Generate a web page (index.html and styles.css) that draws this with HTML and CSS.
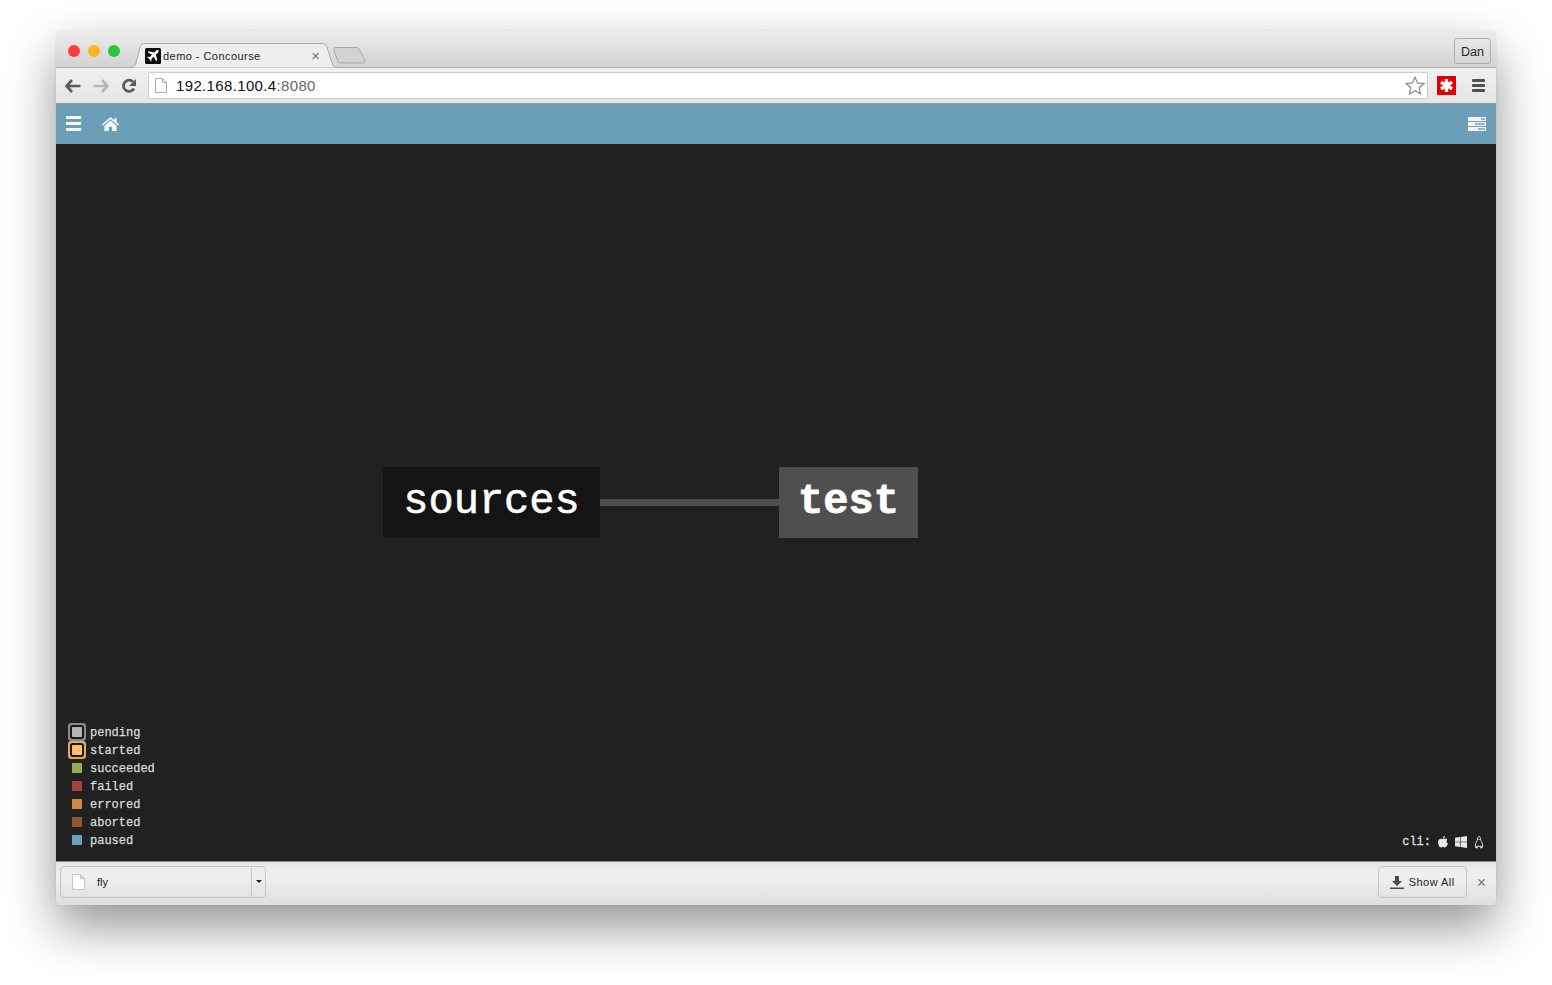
FILE: index.html
```html
<!DOCTYPE html>
<html>
<head>
	<meta charset="utf-8">
	<meta name="viewport" content="width=device-width, initial-scale=1">
	<title>demo - Concourse</title>
	<link rel="stylesheet" href="styles.css">
</head>
<body>
	<div class="window">
		<div class="tabstrip">
			<div class="lights">
				<span class="light red"></span>
				<span class="light yellow"></span>
				<span class="light green"></span>
			</div>
			<div class="tab">
				<svg class="tab-shape" width="208" height="25" viewBox="0 0 208 25">
					<path d="M0 24.500C4 24.500 5 23 6 20L10 4C11 1.500 12.500 .5 15 .5H192C194.500 .5 196 1.500 197 4L202 20C203 23 204 24.500 208 24.500" fill="#eeeeee" stroke="#a9a9a9"/>
				</svg>
				<svg class="favicon" width="16" height="16" viewBox="0 0 16 16">
					<rect width="16" height="16" rx="1.500" fill="#0a0a0a"/>
					<path d="M13.400 2.100C12.700 1.700 11.700 2 11 2.800L9.200 4.600 3.800 3.200 2.700 4.300 7 6.800 4.800 9.100 3 8.800 2.200 9.600 4.400 11 5.700 13.400 6.500 12.600 6.300 10.900 8.700 8.700 11.100 13.100 12.300 12 10.900 6.700 12.800 4.900C13.600 4 13.900 2.900 13.400 2.100Z" fill="#fff"/>
				</svg>
				<span class="tab-title">demo - Concourse</span>
				<span class="tab-close">×</span>
			</div>
			<svg class="newtab" width="33" height="17" viewBox="0 0 33 17">
				<path d="M2.500 .5H23C25 .5 26 1.500 26.700 3L32 13C32.700 15 32 16 30 16H8C6 16 5 15 4.500 13.500L1 3C.5 1.500 1 .5 2.500 .5Z" fill="#d2d2d2" stroke="#a8a8a8"/>
			</svg>
			<div class="spacer"></div>
			<div class="profile">Dan</div>
		</div>

		<div class="toolbar">
			<svg class="nav-icon" width="16" height="14" viewBox="0 0 16 14">
				<path d="M7 1 1.500 7 7 13M2 7H15.500" fill="none" stroke="#5a5a5a" stroke-width="2.600"/>
			</svg>
			<svg class="nav-icon" width="16" height="14" viewBox="0 0 16 14">
				<path d="M9 1 14.500 7 9 13M14 7H.5" fill="none" stroke="#b5b5b5" stroke-width="2.600"/>
			</svg>
			<svg class="nav-icon" width="16" height="16" viewBox="0 0 16 16">
				<path d="M13 10.500A5.600 5.600 0 1 1 12 3.800" fill="none" stroke="#5a5a5a" stroke-width="2.800"/>
				<path d="M15 1V8H8Z" fill="#5a5a5a"/>
			</svg>
			<div class="omnibox">
				<svg class="page-icon" width="12" height="15" viewBox="0 0 12 15">
					<path d="M.5 .5H7.500L11.500 4.500V14.500H.5ZM7.500 .5V4.500H11.500" fill="#fff" stroke="#adadad"/>
				</svg>
				<span class="url">192.168.100.4<span class="url-port">:8080</span></span>
				<svg class="star" width="20" height="19" viewBox="0 0 20 19">
					<path d="M10 1.200 12.600 6.900 18.800 7.600 14.200 11.800 15.500 17.900 10 14.800 4.500 17.900 5.800 11.800 1.200 7.600 7.400 6.900Z" fill="#fff" stroke="#8e8e8e" stroke-width="1.300"/>
				</svg>
			</div>
			<svg class="lastpass" width="19" height="19" viewBox="0 0 19 19">
				<rect width="19" height="19" fill="#e00000"/>
				<path d="M9.500 3V16M3.900 6.300 15.100 12.700M15.100 6.300 3.900 12.700" stroke="#fff" stroke-width="3.400"/>
			</svg>
			<div class="chrome-menu"><span></span><span></span><span></span></div>
		</div>

		<div class="appbar">
			<div class="burger"><span></span><span></span><span></span></div>
			<svg class="home" width="17" height="14" viewBox="0 0 17 14">
				<path d="M8.500 0 12.500 3.500V1H14.500V5.200L17 7.400 16 8.500 8.500 2 1 8.500 0 7.400Z" fill="#fff"/>
				<path d="M8.500 3.500 14.500 8.700V14H10.200V9.800H6.800V14H2.500V8.700Z" fill="#fff"/>
			</svg>
			<div class="spacer"></div>
			<div class="builds">
				<div class="builds-row"><span class="mark short"></span></div>
				<div class="builds-row"><span class="mark long"></span></div>
				<div class="builds-row"><span class="mark mid"></span></div>
			</div>
		</div>

		<div class="canvas">
			<div class="node node-sources">sources</div>
			<div class="edge"></div>
			<div class="node node-test">test</div>

			<div class="footer">
				<ul class="legend">
					<li><span class="swatch pending"></span><span class="legend-text">pending</span></li>
					<li><span class="swatch started"></span><span class="legend-text">started</span></li>
					<li><span class="swatch succeeded"></span><span class="legend-text">succeeded</span></li>
					<li><span class="swatch failed"></span><span class="legend-text">failed</span></li>
					<li><span class="swatch errored"></span><span class="legend-text">errored</span></li>
					<li><span class="swatch aborted"></span><span class="legend-text">aborted</span></li>
					<li><span class="swatch paused"></span><span class="legend-text">paused</span></li>
				</ul>
				<div class="cli">
					<span class="cli-label">cli:</span>
					<svg width="10" height="12" viewBox="0 0 10 12">
						<path d="M7 0C7.100 1.300 6 2.600 4.800 2.600 4.700 1.300 5.900 .1 7 0ZM5 3.100C5.600 3.100 6.300 2.600 7.300 2.600 8.100 2.600 9 3 9.500 3.800 8.100 4.600 8.300 6.900 10 7.500 9.500 9 8.300 11.500 7 11.500 6.200 11.500 5.900 11 5 11 4.100 11 3.800 11.500 3 11.500 1.600 11.500 0 8.500 0 6.300 0 4 1.400 2.700 2.800 2.700 3.700 2.700 4.400 3.100 5 3.100Z" fill="#e8e8e8"/>
					</svg>
					<svg width="12" height="12" viewBox="0 0 12 12">
						<path d="M0 1.800 5 1.100V5.700H0ZM5.600 1 12 0V5.700H5.600ZM0 6.300H5V10.900L0 10.200ZM5.600 6.300H12V12L5.600 11Z" fill="#e8e8e8"/>
					</svg>
					<svg width="10" height="13" viewBox="0 0 10 13">
						<path d="M5 .5C6.200 .5 6.400 1.800 6.500 3 6.600 4.800 8.600 7 8.800 9.200 8.900 10 8.400 10.300 7.800 10.300H2.200C1.600 10.300 1.100 10 1.200 9.200 1.400 7 3.400 4.800 3.500 3 3.600 1.800 3.800 .5 5 .5Z" fill="#212121" stroke="#e8e8e8" stroke-width=".9"/>
						<path d="M3.900 2.900H6.100L5 4.100ZM.8 10.400 3.600 10.600 3.800 12.500 1.600 12.100ZM9.200 10.400 6.400 10.600 6.200 12.500 8.400 12.100Z" fill="#e8e8e8"/>
					</svg>
				</div>
			</div>
		</div>

		<div class="downloads">
			<div class="download-item">
				<svg class="file-icon" width="13" height="16" viewBox="0 0 13 16">
					<path d="M.5 .5H8.500L12.500 4.500V15.500H.5Z" fill="#fff" stroke="#c4c4c4"/>
					<path d="M8.500 .5V4.500H12.500Z" fill="#ddd" stroke="#c4c4c4"/>
				</svg>
				<span class="file-name">fly</span>
				<span class="download-arrow"></span>
			</div>
			<div class="spacer"></div>
			<div class="show-all">
				<svg width="14" height="13" viewBox="0 0 14 13">
					<path d="M5 0H9V5H12L7 10 2 5H5Z" fill="#4a4a4a"/>
					<rect y="11.500" width="14" height="1.500" fill="#4a4a4a"/>
				</svg>
				Show All
			</div>
			<span class="downloads-close">×</span>
		</div>
	</div>
</body>
</html>
```

FILE: styles.css
```css
html, body {
	margin: 0;
	padding: 0;
	height: 985px;
	overflow: hidden;
	background: #fff;
}
body {
	padding: 31px 56px 0;
	box-sizing: border-box;
	font-family: "Liberation Sans", Arial, sans-serif;
}
.spacer {
	flex: 1;
}

.window {
	width: 1440px;
	height: 874px;
	display: flex;
	flex-direction: column;
	border-radius: 5px;
	box-shadow: 0 22px 50px 0 rgba(0, 0, 0, 0.42), 0 0 1px rgba(0, 0, 0, 0.3);
}

/* tab strip */
.tabstrip {
	height: 37px;
	box-sizing: border-box;
	display: flex;
	align-items: flex-end;
	padding: 0 5px 0 12px;
	background: linear-gradient(#ececec, #d3d3d3);
	border-bottom: 1px solid #a8a8a8;
	border-radius: 5px 5px 0 0;
}
.lights {
	display: flex;
	gap: 8px;
	align-self: flex-start;
	margin-top: 14px;
	width: 64px;
}
.light {
	width: 12px;
	height: 12px;
	border-radius: 50%;
}
.red { background: #fc3d39; }
.yellow { background: #fdb524; }
.green { background: #26c83f; }

.tab {
	position: relative;
	width: 198px;
	height: 25px;
	margin-right: 1px;
	margin-bottom: -1px;
	display: flex;
	align-items: center;
	padding-left: 13px;
	box-sizing: border-box;
}
.tab-shape {
	position: absolute;
	left: -2px;
	top: 0;
}
.favicon {
	position: relative;
	flex: none;
}
.tab-title {
	position: relative;
	margin-left: 2px;
	font-size: 11px;
	color: #222;
	letter-spacing: 0.45px;
	flex: 1;
}
.tab-close {
	position: relative;
	font-size: 15px;
	color: #777;
	margin-right: 10px;
}
.newtab {
	margin-bottom: 3px;
	margin-left: 2px;
}
.profile {
	width: 37px;
	height: 26px;
	box-sizing: border-box;
	margin-bottom: 3px;
	border: 1px solid #aeaeae;
	border-radius: 3px;
	text-align: center;
	line-height: 26px;
	font-size: 12.5px;
	color: #222;
}

/* toolbar */
.toolbar {
	height: 36px;
	box-sizing: border-box;
	display: flex;
	align-items: center;
	padding-left: 9px;
	background: linear-gradient(#f0f0f0, #e4e4e4);
	border-bottom: 1px solid #8f9a9f;
}
.nav-icon {
	flex: none;
	margin-right: 12px;
}
.omnibox {
	width: 1280px;
	height: 27px;
	box-sizing: border-box;
	margin-left: -1px;
	display: flex;
	align-items: center;
	padding: 0 2px 0 6px;
	background: #fff;
	border: 1px solid #cfcfcf;
	border-radius: 3px;
}
.page-icon {
	flex: none;
}
.url {
	margin-left: 9px;
	flex: 1;
	font-size: 15px;
	color: #111;
	letter-spacing: 0.35px;
}
.url-port {
	color: #666;
}
.star {
	flex: none;
}
.lastpass {
	flex: none;
	margin-left: 9px;
}
.chrome-menu {
	margin-left: 16px;
	display: flex;
	flex-direction: column;
	gap: 2px;
}
.chrome-menu span {
	display: block;
	width: 13px;
	height: 3px;
	border-radius: 1px;
	background: #4f4f4f;
}

/* concourse top bar */
.appbar {
	height: 40px;
	flex: none;
	box-sizing: border-box;
	display: flex;
	align-items: center;
	padding: 0 10px 1px;
	background: #6b9fb8;
}
.burger {
	display: flex;
	flex-direction: column;
	gap: 3px;
	margin-right: 20px;
}
.burger span {
	display: block;
	width: 15px;
	height: 3px;
	background: #f5f8fa;
}
.home {
	margin-left: 1px;
}
.builds {
	display: flex;
	flex-direction: column;
	gap: 1px;
}
.builds-row {
	width: 18px;
	height: 4px;
	background: #f2f6f8;
	display: flex;
	justify-content: flex-end;
	align-items: center;
}
.mark {
	height: 2px;
	margin-right: 1px;
	background: #8fb7c9;
}
.short { width: 4px; }
.long { width: 10px; }
.mid { width: 7px; }

/* pipeline canvas */
.canvas {
	position: relative;
	flex: 1;
	display: flex;
	flex-direction: column;
	justify-content: flex-end;
	background: #212121;
}
.node {
	position: absolute;
	top: 323px;
	height: 71px;
	box-sizing: border-box;
	text-align: center;
	line-height: 70px;
	font-family: "Liberation Mono", "Courier New", monospace;
	font-size: 42px;
	color: #fff;
}
.node-sources {
	left: 327px;
	width: 217px;
	background: #141414;
	-webkit-text-stroke: 0.6px #fff;
}
.node-test {
	left: 723px;
	width: 139px;
	background: #4f4f4f;
	font-weight: bold;
	-webkit-text-stroke: 0.8px #fff;
}
.edge {
	position: absolute;
	left: 544px;
	top: 355px;
	width: 179px;
	height: 7px;
	background: #4f4f4f;
}
.footer {
	display: flex;
	justify-content: space-between;
	align-items: flex-end;
	padding: 0 12px 12px;
}
.legend {
	list-style: none;
	margin: 0;
	padding: 0;
	font-family: "Liberation Mono", "Courier New", monospace;
	font-size: 12px;
	color: #dcdcdc;
}
.legend li {
	height: 18px;
	display: flex;
	align-items: center;
	gap: 8px;
	padding-left: 4px;
}
.legend-text {
	padding-top: 2px;
	-webkit-text-stroke: 0.25px #dcdcdc;
}
.swatch {
	width: 10px;
	height: 10px;
	flex: none;
}
.pending {
	background: #b4b4b4;
	border-radius: 1px;
	box-shadow: 0 0 0 2px #1a1a1a, 0 0 0 4px #8a8a8a;
}
.started {
	background: #fcc170;
	border-radius: 1px;
	box-shadow: 0 0 0 2px #1a1a1a, 0 0 0 4px #e0aa62;
}
.succeeded { background: #96ad56; }
.failed { background: #a83f42; }
.errored { background: #d08845; }
.aborted { background: #8f5535; }
.paused { background: #6fa3bd; }
.cli {
	display: flex;
	align-items: center;
	gap: 7px;
	font-family: "Liberation Mono", "Courier New", monospace;
	font-size: 12px;
	color: #dcdcdc;
	-webkit-text-stroke: 0.35px #dcdcdc;
}

/* download shelf */
.downloads {
	height: 44px;
	flex: none;
	box-sizing: border-box;
	display: flex;
	align-items: flex-start;
	padding: 4px 5px 0 4px;
	background: linear-gradient(#e6e6e6, #f0f0f0 30%, #dedede);
	border-top: 1px solid #8d8d8d;
	border-radius: 0 0 5px 5px;
	font-size: 11px;
	color: #222;
}
.download-item {
	width: 206px;
	height: 32px;
	box-sizing: border-box;
	display: flex;
	align-items: center;
	padding-left: 11px;
	border: 1px solid #c6c6c6;
	border-radius: 4px;
}
.file-name {
	margin-left: 12px;
	flex: 1;
}
.download-arrow {
	width: 14px;
	height: 28px;
	flex: none;
	box-sizing: border-box;
	border-left: 1px solid #c6c6c6;
	position: relative;
}
.download-arrow::after {
	content: "";
	position: absolute;
	left: 4px;
	top: 12px;
	border: 3px solid transparent;
	border-top-color: #222;
	border-bottom: 0;
}
.show-all {
	width: 89px;
	height: 32px;
	box-sizing: border-box;
	display: flex;
	align-items: center;
	justify-content: center;
	gap: 5px;
	border: 1px solid #c6c6c6;
	border-radius: 4px;
	letter-spacing: 0.45px;
}
.downloads-close {
	margin: 7px 5px 0 10px;
	font-size: 16px;
	line-height: 20px;
	color: #777;
}
```
